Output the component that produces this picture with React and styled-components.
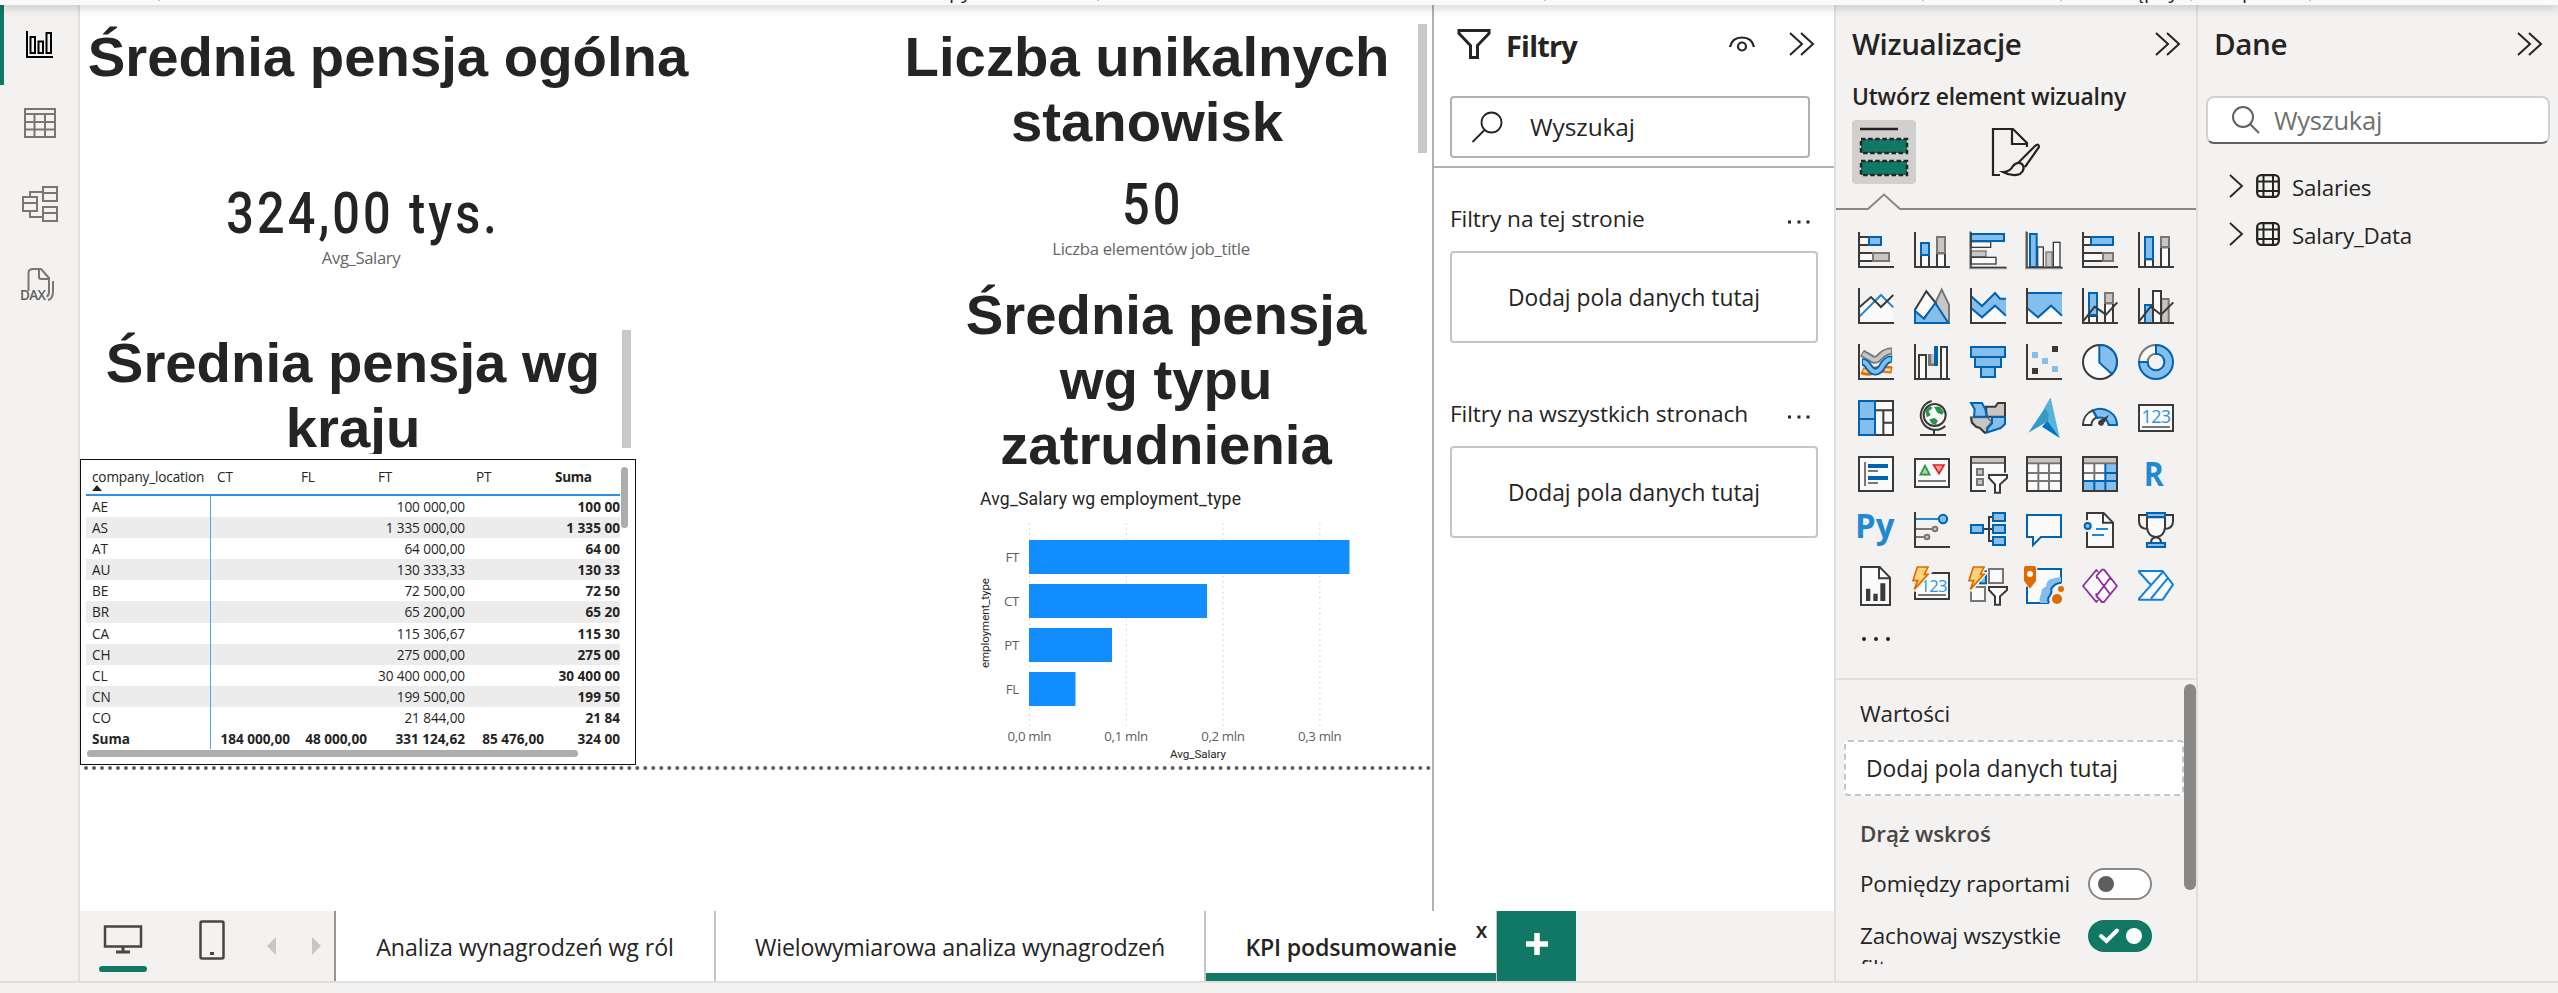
import React from "react";
import styled, { createGlobalStyle, css } from "styled-components";

const ui = `"Open Sans", "Noto Sans", sans-serif`;
const din = `Roboto, "Open Sans", sans-serif`;
const DARK = "#3b3a39";
const BLUE = "#0063b1";
const SKY = "#83beec";
const GRAY = "#797775";
const LGRAY = "#c8c6c4";
const PAPER = "#fafafa";
const GREEN = "#117865";

const Global = createGlobalStyle`
  *, *::before, *::after { box-sizing: border-box; }
  body { margin: 0; background: #f3f2f1; font-family: ${ui}; color: #252423; overflow: hidden; }
  svg { display: block; overflow: visible; flex: none; }
`;

/* ---------- shell ---------- */
const Shell = styled.div`
  display: flex;
  flex-direction: column;
  width: 2558px;
  height: 993px;
  background: #f3f2f1;
`;
const Ribbon = styled.div`
  position: relative;
  z-index: 5;
  flex: none;
  height: 5px;
  background: #fafafa;
  box-shadow: 0 2px 10px rgba(0, 0, 0, 0.28);
`;
const RibbonClip = styled.div`
  position: relative;
  height: 5px;
  overflow: hidden;
`;
const RibbonText = styled.span`
  position: absolute;
  left: ${(p) => p.$x}px;
  top: -21px;
  font-size: 20px;
  line-height: 24px;
  white-space: pre;
`;
const RibbonTick = styled.i`
  position: absolute;
  left: ${(p) => p.$x}px;
  top: 0;
  width: 2px;
  height: 1px;
  background: #c8c6c4;
`;
const Workspace = styled.div`
  display: flex;
  flex: none;
  height: 976px;
`;
const StatusStrip = styled.div`
  flex: none;
  height: 12px;
  border-top: 2px solid #e1dfdd;
`;
const Rail = styled.nav`
  width: 80px;
  flex: none;
  border-right: 2px solid #e1dfdd;
`;
const RailItem = styled.div`
  height: 80px;
  padding-top: 26px;
  padding-left: ${(p) => (p.$on ? 16 : 20)}px;
  border-left: ${(p) => (p.$on ? `4px solid ${GREEN}` : "0")};
`;
const Center = styled.main`
  width: 1754px;
  flex: none;
  display: flex;
  flex-direction: column;
`;
const Stage = styled.div`
  display: flex;
  height: 906px;
  flex: none;
`;
const Canvas = styled.section`
  position: relative;
  width: 1352px;
  flex: none;
  background: #fff;
  overflow: hidden;
`;

/* ---------- report visuals ---------- */
const Visual = styled.div`
  position: absolute;
  left: ${(p) => p.$x}px;
  top: ${(p) => p.$y - 5}px;
  width: ${(p) => p.$w}px;
  height: ${(p) => p.$h}px;
`;
const Heading = styled.div`
  height: 100%;
  overflow: hidden;
  text-align: center;
  font: bold 56.3px/65.2px "Liberation Sans", Arial, sans-serif;
`;
const GrayThumb = styled.div`
  height: 100%;
  background: #c8c8c8;
`;
const Card = styled.div`
  display: flex;
  flex-direction: column;
  align-items: center;
`;
const CardValue = styled.div`
  font: 500 56.5px/62px ${din};
  letter-spacing: 3.6px;
  margin-right: -3.6px;
  white-space: pre;
  transform: scaleX(0.86);
`;
const CardLabel = styled.div`
  margin-top: 1px;
  font-size: 16.7px;
  line-height: 24px;
  letter-spacing: ${(p) => p.$ls || -0.4}px;
  color: #666;
  white-space: nowrap;
`;
const PageEdge = styled.div`
  border-top: 4px dotted #605e5c;
`;

const MatrixFrame = styled.div`
  height: 100%;
  display: flex;
  border: 1.5px solid #111;
  padding: 7px 6px 6px 5px;
  background: #fff;
`;
const MatrixBody = styled.div`
  width: 534px;
`;
const MatrixGrid = styled.div`
  display: grid;
  grid-template-columns: 125px 84px 77px 98px 79px 71px;
  font-size: 13.6px;
`;
const Cell = styled.div`
  height: 21.1px;
  line-height: 22px;
  white-space: pre;
  overflow: hidden;
  text-align: ${(p) => (p.$first ? "left" : "right")};
  padding: ${(p) => (p.$first ? "0 0 0 6px" : p.$last ? "0" : "0 5px 0 0")};
  background: ${(p) => (p.$band ? "#ececec" : "#fff")};
  border-right: ${(p) => (p.$first ? "1.5px solid #4aa5f7" : "0")};
  font-weight: ${(p) => (p.$bold ? 700 : 400)};
  letter-spacing: ${(p) => (p.$bold ? 0 : -0.1)}px;
`;
const HeadCell = styled.div`
  height: 29px;
  line-height: 20px;
  padding: 0 0 0 6px;
  white-space: pre;
  border-bottom: 2px solid #2f8fe8;
  font-weight: ${(p) => (p.$bold ? 700 : 400)};
  letter-spacing: ${(p) => (p.$bold ? -0.3 : -0.15)}px;
`;
const SortMark = styled.i`
  display: block;
  width: 0;
  margin-top: -2px;
  border: 5px solid transparent;
  border-top: 0;
  border-bottom: 6px solid #252423;
`;
const HThumb = styled.div`
  width: 491px;
  height: 7px;
  margin: 1px 0 0 1px;
  border-radius: 4px;
  background: #adadad;
`;
const VThumb = styled.div`
  width: 7px;
  height: 61px;
  margin-left: 1px;
  border-radius: 4px;
  background: #adadad;
`;

/* ---------- page tabs ---------- */
const PageBar = styled.div`
  display: flex;
  height: 70px;
  flex: none;
`;
const ViewModes = styled.div`
  width: 254px;
  display: flex;
  padding-left: 19px;
`;
const ViewMode = styled.div`
  width: ${(p) => p.$w}px;
  margin-right: ${(p) => p.$gap}px;
  padding-top: ${(p) => p.$top}px;
  display: flex;
  flex-direction: column;
  align-items: center;
`;
const ModeUnderline = styled.i`
  width: 48px;
  height: 6px;
  margin-top: 13px;
  border-radius: 3px;
  background: ${GREEN};
`;
const Tab = styled.div`
  position: relative;
  width: ${(p) => p.$w}px;
  flex: none;
  background: #fff;
  border-left: 2px solid ${(p) => (p.$first ? "#979593" : "#c8c6c4")};
  text-align: center;
  font-size: 23.2px;
  line-height: 73px;
  letter-spacing: ${(p) => p.$ls}px;
  white-space: nowrap;
  ${(p) =>
    p.$on &&
    css`
      font-weight: 600;
      box-shadow: inset 0 -8px 0 ${GREEN};
      border-right: 1px solid #c8c6c4;
    `}
`;
const TabClose = styled.span`
  position: absolute;
  right: 9px;
  top: 9px;
  font-size: 21px;
  line-height: 20px;
`;
const AddTab = styled.div`
  width: 79px;
  display: grid;
  place-items: center;
  padding-bottom: 4px;
  background: ${GREEN};
`;

/* ---------- filters pane ---------- */
const Filters = styled.aside`
  width: 402px;
  flex: none;
  background: #fff;
  border-left: 2px solid #b3b0ad;
`;
const FilterTop = styled.div`
  height: 163px;
  padding: 0 20px 0 16px;
  border-bottom: 2px solid #b3b0ad;
`;
const FilterTitleRow = styled.div`
  display: flex;
  align-items: center;
  height: 91px;
  padding: 0 0 13px 7px;
`;
const FilterTitle = styled.h2`
  flex: 1;
  margin: 0 0 0 15px;
  font-size: 29px;
  line-height: 40px;
  font-weight: 700;
  letter-spacing: -0.8px;
  padding-top: 3px;
`;
const FilterSearch = styled.div`
  width: 360px;
  height: 62px;
  display: flex;
  align-items: center;
  padding: 0 0 1px 20px;
  border: 2px solid #b3b0ad;
  border-radius: 4px;
  font-size: 24.5px;
  letter-spacing: -0.1px;
`;
const SearchText = styled.span`
  margin-left: ${(p) => p.$gap}px;
`;
const FilterGroup = styled.div`
  padding: ${(p) => p.$top}px 16px 0;
`;
const FilterHead = styled.div`
  display: flex;
  justify-content: space-between;
  align-items: center;
  height: 32px;
  font-size: 22.7px;
  letter-spacing: ${(p) => p.$ls}px;
  white-space: nowrap;
`;
const DropWell = styled.div`
  width: 368px;
  height: 92px;
  margin-top: 17px;
  display: grid;
  place-items: center;
  border: 2px solid #c8c6c4;
  border-radius: 4px;
  font-size: 22.8px;
`;

/* ---------- visualizations pane ---------- */
const VizPane = styled.aside`
  width: 364px;
  flex: none;
  border-left: 2px solid #e1dfdd;
  border-right: 2px solid #e1dfdd;
`;
const PaneTitle = styled.h2`
  display: flex;
  align-items: center;
  justify-content: space-between;
  height: 42px;
  margin: 18px 16px 0 16px;
  font-size: 29.6px;
  line-height: 42px;
  font-weight: 600;
  letter-spacing: ${(p) => p.$ls}px;
`;
const SubTitle = styled.div`
  margin: 16px 0 0 16px;
  height: 32px;
  line-height: 32px;
  font-size: 22.8px;
  font-weight: 600;
  letter-spacing: -0.2px;
  white-space: nowrap;
`;
const ModeTabs = styled.div`
  display: flex;
  margin: 7px 0 0 16px;
  gap: 68px;
`;
const ModeTab = styled.div`
  width: 64px;
  height: 64px;
  padding: 8px;
  border-radius: 4px;
  background: ${(p) => (p.$on ? "#d2d0ce" : "transparent")};
`;
const TabPointer = styled.div`
  padding-top: 10px;
`;
const Gallery = styled.div`
  display: grid;
  grid-template-columns: repeat(6, 36px);
  grid-auto-rows: 36px;
  gap: 20px;
  height: 446px;
  margin-top: 22px;
  padding-left: 22px;
  align-content: start;
`;
const MoreDots = styled.div`
  display: flex;
  gap: 8px;
  padding: 13px 0 0 4px;
`;
const Dot = styled.i`
  width: ${(p) => p.$s}px;
  height: ${(p) => p.$s}px;
  border-radius: 50%;
  background: #252423;
`;
const Fields = styled.div`
  display: flex;
  border-top: 2px solid #e1dfdd;
`;
const FieldList = styled.div`
  width: 348px;
  height: 284px;
  padding-left: 8px;
  overflow: hidden;
  font-size: 22.4px;
`;
const FieldLabel = styled.div`
  padding-left: 16px;
  margin-top: ${(p) => p.$top}px;
  line-height: 32px;
  letter-spacing: -0.1px;
  font-weight: ${(p) => (p.$bold ? 600 : 400)};
  color: ${(p) => (p.$bold ? "#484644" : "#252423")};
`;
const FieldWell = styled.div`
  width: 340px;
  height: 56px;
  margin-top: 10px;
  padding-left: 20px;
  line-height: 53px;
  font-size: 22.8px;
  background: #fff;
  border: 2px dashed #c8c6c4;
  border-radius: 4px;
`;
const SwitchRow = styled.div`
  display: flex;
  justify-content: space-between;
  width: 308px;
  margin-top: ${(p) => p.$top}px;
  padding-left: 16px;
  line-height: 32px;
  letter-spacing: ${(p) => p.$ls}px;
  white-space: nowrap;
`;
const Switch = styled.span`
  display: flex;
  align-items: center;
  justify-content: ${(p) => (p.$on ? "flex-end" : "flex-start")};
  gap: 7px;
  width: 64px;
  height: 32px;
  padding: 0 ${(p) => (p.$on ? 10 : 8)}px;
  border-radius: 16px;
  border: ${(p) => (p.$on ? "0" : "2px solid #8a8886")};
  background: ${(p) => (p.$on ? GREEN : "#fff")};
`;
const Knob = styled.i`
  width: 16px;
  height: 16px;
  border-radius: 50%;
  background: ${(p) => p.$c};
`;
const FieldThumb = styled.div`
  width: 12px;
  height: 206px;
  margin-top: 4px;
  border-radius: 6px;
  background: #8a8886;
`;

/* ---------- data pane ---------- */
const DataPane = styled.aside`
  width: 360px;
  flex: none;
`;
const DataSearch = styled.div`
  display: flex;
  align-items: center;
  width: 344px;
  height: 48px;
  margin: 31px 0 18px 8px;
  padding-left: 24px;
  background: #fff;
  border: 2px solid #d1d1d1;
  border-bottom-color: #616161;
  border-radius: 8px;
  font-size: 25.6px;
  letter-spacing: -0.3px;
  color: #707070;
`;
const TreeRow = styled.div`
  display: flex;
  align-items: center;
  height: 48px;
  padding-left: 31px;
  font-size: 22.4px;
  letter-spacing: ${(p) => p.$ls}px;
`;
const TreeLabel = styled.span`
  margin-left: 12px;
  padding-top: 2px;
`;

/* ---------- drawing helpers ---------- */
const Svg = ({ w, h, vb, children, ...rest }) => (
  <svg width={w} height={h} viewBox={vb || `0 0 ${w} ${h}`} fill="none" {...rest}>
    {children}
  </svg>
);
const Axis = () => <path d="M3 0V105H108" stroke={DARK} strokeWidth="6" />;
const palette = { w: [PAPER, DARK], b: [SKY, BLUE], g: [LGRAY, GRAY] };
const Box = ({ k, r, sw = 6 }) => (
  <rect x={r[0]} y={r[1]} width={r[2]} height={r[3]} fill={palette[k][0]} stroke={palette[k][1]} strokeWidth={sw} />
);
const Poly = ({ p, f = "none", s = "none", sw = 6, open }) =>
  open ? (
    <polyline points={p} fill={f} stroke={s} strokeWidth={sw} />
  ) : (
    <polygon points={p} fill={f} stroke={s} strokeWidth={sw} />
  );
const Funnel = () => (
  <>
    <rect x="48" y="50" width="66" height="64" fill="#f3f2f1" stroke="none" />
    <Poly p="57,57 111,57 111,66 90,85 90,110 75,110 75,85 57,66" f={PAPER} s={DARK} />
  </>
);
const Bolt = () => (
  <>
    <Poly p="10,-4 44,-4 31,18 43,18 0,68 10,39 -3,39" f="#f3f2f1" s="#f3f2f1" sw={12} />
    <Poly p="10,-3 42,-3 31,19 42,19 1,64 11,38 -3,38" f="#f9d47a" s="#dd6b00" sw={5} />
  </>
);
const Digits = ({ x, y, size }) => (
  <text x={x} y={y} fontSize={size} fontFamily="Open Sans" fill="#2f96da" textAnchor="middle" letterSpacing="-2">
    123
  </text>
);

const visuals = [
  <><Box k="w" r={[3, 15, 30, 24]} /><Box k="b" r={[33, 15, 36, 24]} /><Box k="w" r={[3, 63, 42, 24]} /><Box k="g" r={[45, 63, 48, 24]} /><Axis /></>,
  <><Box k="w" r={[21, 69, 24, 36]} /><Box k="b" r={[21, 33, 24, 36]} /><Box k="w" r={[69, 64, 24, 41]} /><Box k="g" r={[69, 15, 24, 48]} /><Axis /></>,
  <><path d="M1 -2V108H111" stroke="#979593" strokeWidth="7" /><Box k="w" r={[3, 29, 59, 17]} sw={4} /><Box k="b" r={[3, 6, 99, 21]} /><Box k="g" r={[3, 57, 45, 17]} sw={4} /><Box k="w" r={[3, 76, 75, 20]} sw={4} /><path d="M3 0V106H108" stroke={DARK} strokeWidth="4" /></>,
  <><path d="M1 -2V108H111" stroke="#979593" strokeWidth="7" /><Box k="w" r={[35, 45, 17, 60]} sw={4} /><Box k="b" r={[12, 6, 20, 99]} /><Box k="g" r={[60, 60, 18, 45]} sw={4} /><Box k="w" r={[82, 31, 20, 74]} sw={4} /><path d="M3 0V106H108" stroke={DARK} strokeWidth="4" /></>,
  <><Box k="w" r={[3, 15, 24, 24]} /><Box k="b" r={[27, 15, 66, 24]} /><Box k="w" r={[3, 63, 60, 24]} /><Box k="g" r={[63, 63, 30, 24]} /><Axis /></>,
  <><Box k="w" r={[21, 82, 24, 23]} /><Box k="b" r={[21, 15, 24, 66]} /><Box k="w" r={[69, 46, 24, 59]} /><Box k="g" r={[69, 15, 24, 30]} /><Axis /></>,

  <><Poly p="3,56 39,27 69,57 106,20 106,103 3,103" f={PAPER} /><Poly open p="4,86 69,21 106,58" s="#1f86cc" /><Poly open p="4,58 39,27 69,57 106,21" s={DARK} /><Axis /></>,
  <><Poly p="64,45 83,5 105,50 105,105 80,105" f={LGRAY} s={GRAY} /><Poly p="3,65 37,10 66,46 28,93 3,75" f={PAPER} s={DARK} /><Poly p="3,68 30,92 64,45 103,105 3,105" f={SKY} s={BLUE} /></>,
  <><Poly p="3,60 36,90 75,54 108,84 108,105 3,105" f={PAPER} /><Poly p="3,24 36,54 75,15 90,32 108,32 108,84 75,54 36,90 3,60" f={SKY} /><Poly open p="3,24 36,54 75,15 90,32 108,32" s={BLUE} /><Poly open p="3,60 36,88 75,53 108,83" s={BLUE} /><Axis /></>,
  <><Poly p="3,60 36,90 75,54 108,84 108,105 3,105" f={PAPER} /><Poly p="3,15 108,15 108,84 75,52 36,88 3,60" f={SKY} /><Poly open p="3,15 108,15" s={BLUE} /><Poly open p="3,60 36,88 75,53 108,83" s={BLUE} /><Axis /></>,
  <><Box k="w" r={[21, 84, 24, 21]} /><Box k="b" r={[21, 15, 24, 66]} /><Box k="w" r={[69, 46, 24, 59]} /><Box k="g" r={[69, 15, 24, 30]} /><Poly open p="5,98 38,56 72,80 106,43" s={DARK} /><Axis /></>,
  <><Box k="g" r={[70, 33, 22, 72]} /><Box k="b" r={[21, 51, 24, 54]} /><Box k="w" r={[45, 9, 24, 96]} /><Poly open p="5,98 38,56 69,80 106,43" s={DARK} /><Axis /></>,

  <>
    <path d="M12 80Q30 88 48 80T102 78" stroke="#dd6b00" strokeWidth="22" /><path d="M16 79Q30 86 48 80T98 78" stroke="#f9d47a" strokeWidth="9" />
    <path d="M12 27L46 47Q54 50 62 42Q80 22 102 21" stroke={GRAY} strokeWidth="23" /><path d="M15 29L46 47Q54 50 62 42Q80 22 99 21" stroke={LGRAY} strokeWidth="12" />
    <path d="M12 54Q24 54 32 68Q50 96 70 72Q84 44 102 46" stroke={BLUE} strokeWidth="23" /><path d="M15 54Q24 54 32 68Q50 96 70 72Q84 44 99 46" stroke={SKY} strokeWidth="12" />
    <Axis />
  </>,
  <><Box k="w" r={[15, 33, 21, 72]} /><rect x="42" y="30" width="20" height="36" fill={GRAY} /><rect x="52" y="30" width="8" height="28" fill={LGRAY} /><rect x="60" y="6" width="12" height="60" fill={BLUE} /><Box k="w" r={[81, 9, 18, 96]} /><Axis /></>,
  <><Box k="b" r={[3, 9, 102, 30]} /><Box k="b" r={[15, 39, 78, 30]} /><Box k="b" r={[33, 69, 42, 30]} /></>,
  <><path d="M18 24h18v18h-18zM48 42h18v18h-18zM78 66h18v18h-18z" fill={SKY} /><path d="M78 6h18v18h-18zM18 72h18v18h-18z" fill={DARK} /><Axis /></>,
  <><circle cx="54" cy="54" r="51" fill={PAPER} stroke={DARK} strokeWidth="6" /><path d="M52 56V3A51 51 0 0 1 90 90Z" fill={SKY} stroke={BLUE} strokeWidth="6" /></>,
  <><path d="M54 3A51 51 0 0 0 3 54H29A25 25 0 0 1 54 29Z" fill={PAPER} stroke={GRAY} strokeWidth="6" /><path d="M54 3A51 51 0 1 1 3 54H29A25 25 0 1 0 54 29Z" fill={SKY} stroke={BLUE} strokeWidth="6" /></>,

  <><Box k="w" r={[3, 3, 102, 102]} /><path d="M51 31H105M76 31V105M76 68H105" stroke={DARK} strokeWidth="6" /><Box k="b" r={[3, 3, 48, 102]} /><path d="M3 57H51" stroke={BLUE} strokeWidth="6" /></>,
  <>
    <circle cx="62" cy="45" r="33" fill={PAPER} stroke={DARK} strokeWidth="6" />
    <path d="M34 30L48 18L56 24L44 34L50 46L38 52ZM60 20L78 20L90 36L84 44L70 38ZM46 58L62 54L72 62L64 76L52 70Z" fill="#2b9348" />
    <path d="M53 3A44 44 0 1 0 94 78M60 90V104M18 105H96" stroke={DARK} strokeWidth="6" />
  </>,
  <>
    <path d="M48 20H76L84 9H105V50H50Z" fill={LGRAY} stroke={DARK} strokeWidth="6" />
    <path d="M3 52H52L66 66L50 84L52 96L44 98L30 84L18 80L6 68Z" fill={LGRAY} stroke={GRAY} strokeWidth="6" />
    <path d="M3 52L6 68L18 80L30 84L44 98L52 96" stroke={DARK} strokeWidth="6" />
    <path d="M3 9H36L46 28L50 50H12L14 28Z" fill={SKY} stroke={BLUE} strokeWidth="6" />
    <path d="M66 51H105V72L92 84L74 90L52 97V86L66 70Z" fill={SKY} stroke={BLUE} strokeWidth="6" />
  </>,
  <><Poly p="74,-7 55,26 64,76 101,114" f="#59b4d9" /><Poly p="101,114 48,80 64,62" f="#0072c6" /><Poly p="74,-7 55,26 7,98 66,64" f="#3999c6" /><Poly p="74,-7 56,22 78,60" f="#59b4d9" /></>,
  <>
    <path d="M3 75A51 48 0 0 1 32 31L44 52A28 26 0 0 0 28 75Z" fill={PAPER} stroke={DARK} strokeWidth="6" />
    <path d="M33 31A51 48 0 0 1 105 75H80A26 26 0 0 0 46 54Z" fill={SKY} stroke={BLUE} strokeWidth="6" />
    <path d="M82 44L66 70A9 9 0 1 1 54 60Z" fill={DARK} />
  </>,
  <><Box k="w" r={[3, 15, 102, 78]} /><Digits x={54} y={70} size={54} /><path d="M12 81H96" stroke={GRAY} strokeWidth="6" /></>,

  <><Box k="w" r={[3, 3, 102, 102]} /><path d="M21 18V90M30 45H60M30 81H60" stroke={GRAY} strokeWidth="6" /><path d="M30 30H90M30 66H90" stroke={BLUE} strokeWidth="12" /></>,
  <><Box k="w" r={[3, 9, 102, 84]} /><Poly p="33,29 47,56 19,56" f="#98d8a5" s="#2b9348" sw={5} /><Poly p="59,27 90,27 75,53" f="#f7a1a1" s="#e0201b" sw={5} /><path d="M12 75H96" stroke={GRAY} strokeWidth="6" /></>,
  <><Box k="w" r={[3, 3, 102, 102]} /><rect x="6" y="6" width="96" height="13" fill={LGRAY} /><path d="M6 21H102" stroke={DARK} strokeWidth="4" /><Box k="g" r={[21, 39, 18, 18]} /><Box k="g" r={[21, 69, 18, 18]} /><Funnel /></>,
  <><Box k="w" r={[3, 3, 102, 102]} /><rect x="6" y="6" width="96" height="14" fill={LGRAY} /><path d="M6 22H102M6 51H102M6 75H102M37 24V102M69 24V102" stroke={GRAY} strokeWidth="6" /><rect x="3" y="3" width="102" height="102" stroke={DARK} strokeWidth="6" /></>,
  <><Box k="w" r={[3, 3, 102, 102]} /><rect x="6" y="6" width="96" height="14" fill={LGRAY} /><path d="M69 24H102V102H6V75H69Z" fill={SKY} /><path d="M6 22H102M6 51H69M37 24V75" stroke={GRAY} strokeWidth="6" /><path d="M69 51H102M6 75H102M37 75V102M70 24V102" stroke={BLUE} strokeWidth="6" /><rect x="3" y="3" width="102" height="102" stroke={DARK} strokeWidth="6" /></>,
  <text x="17" y="90" fontSize="100" fontWeight="700" fontFamily="Open Sans" fill="#1f8ad0" textLength="60" lengthAdjust="spacingAndGlyphs">R</text>,

  <text x="-9" y="77" fontSize="100" fontWeight="700" fontFamily="Open Sans" fill="#1f8ad0" textLength="118" lengthAdjust="spacingAndGlyphs">Py</text>,
  <><path d="M6 21H72" stroke="#1f8ad0" strokeWidth="6" /><path d="M6 51H56M6 75H32" stroke={GRAY} strokeWidth="6" /><circle cx="87" cy="21" r="12.5" fill={SKY} stroke={BLUE} strokeWidth="6" /><circle cx="63" cy="51" r="7" fill={LGRAY} stroke={GRAY} strokeWidth="6" /><circle cx="39" cy="75" r="7" fill={LGRAY} stroke={GRAY} strokeWidth="6" /><Axis /></>,
  <><path d="M42 51H66M66 15H57V87H66" stroke={DARK} strokeWidth="6" /><Box k="b" r={[3, 39, 36, 24]} /><Box k="b" r={[69, 3, 36, 24]} /><Box k="b" r={[69, 39, 36, 24]} /><Box k="b" r={[69, 75, 36, 24]} /></>,
  <Poly p="3,9 105,9 105,75 45,75 21,99 21,75 3,75" f={PAPER} s={BLUE} />,
  <><Poly p="15,3 65,3 93,32 93,105 15,105" f={PAPER} s={DARK} /><path d="M63 3V32H93" stroke={DARK} strokeWidth="6" /><circle cx="17" cy="42" r="18" fill="#f3f2f1" /><circle cx="17" cy="42" r="9" fill={SKY} stroke={BLUE} strokeWidth="6" /><path d="M42 51H78M30 69H66" stroke="#1f8ad0" strokeWidth="6" /></>,
  <>
    <path d="M27 9H3V28Q3 50 28 51M81 9H105V28Q105 50 80 51" stroke={DARK} strokeWidth="6" />
    <path d="M27 16V46Q30 74 54 75Q78 74 81 46V16Z" fill={PAPER} stroke={DARK} strokeWidth="6" />
    <path d="M39 92Q39 78 54 76Q69 78 69 92" stroke={DARK} strokeWidth="6" />
    <Box k="b" r={[27, 3, 54, 12]} /><Box k="b" r={[27, 93, 54, 12]} />
  </>,

  <><Poly p="9,-3 65,-3 96,29 96,111 9,111" f={PAPER} s={DARK} /><path d="M63 -3V31H95" stroke={DARK} strokeWidth="6" /><path d="M24 62H37V99H24ZM46 77H59V99H46ZM67 46H82V99H67Z" fill={DARK} /></>,
  <><Box k="w" r={[3, 15, 102, 78]} /><Digits x={59} y={71} size={50} /><path d="M12 81H96" stroke={GRAY} strokeWidth="6" /><Bolt /></>,
  <><rect x="57" y="3" width="42" height="42" fill={PAPER} stroke={GRAY} strokeWidth="6" /><rect x="3" y="57" width="42" height="42" fill={PAPER} stroke={GRAY} strokeWidth="6" /><rect x="57" y="57" width="42" height="42" fill={PAPER} stroke={GRAY} strokeWidth="6" /><rect x="30" y="10" width="18" height="36" fill={SKY} stroke={BLUE} strokeWidth="6" /><Funnel /><Bolt /></>,
  <>
    <rect x="3" y="3" width="102" height="102" fill={PAPER} stroke={BLUE} strokeWidth="6" />
    <path d="M42 105Q38 88 46 78Q44 60 60 56Q62 34 78 32L105 26V105Z" fill={SKY} />
    <path d="M69 108Q60 92 72 82Q76 70 78 60Q94 44 112 46V112H69Z" fill="#f3f2f1" />
    <path d="M69 105Q62 92 72 82Q78 74 76 62Q88 44 105 45" stroke={BLUE} strokeWidth="6" />
    <rect x="-8" y="-8" width="42" height="64" fill="#f3f2f1" />
    <path d="M-2 -6H26L30 -2V38L12 62L-6 38V-2Z" fill="#dd6b00" /><circle cx="12" cy="18" r="9" fill={PAPER} />
    <circle cx="105" cy="63" r="9" fill="#dd6b00" /><circle cx="93" cy="93" r="15" fill="#dd6b00" />
  </>,
  <>
    <path d="M3 54L43 5H66L105 54L66 102H43Z" fill={PAPER} />
    <path d="M48 12L43 6L3 54L43 102L48 96M43 24L60 5H66L105 54L66 102H60L43 84L84 30M43 24L84 78M43 24L46 32M43 84V76" stroke="#8f2d9c" strokeWidth="5.5" strokeLinejoin="round" />
  </>,
  <>
    <path d="M3 9H75L105 48V56L75 95H3V92L39 51L3 14Z" fill={PAPER} />
    <path d="M39 51L3 12V9H74L105 50L74 95H3V92L76 10M39 92L88 32" stroke="#0f7fe0" strokeWidth="6" strokeLinejoin="round" />
  </>,
];

const Chevrons = () => (
  <Svg w="25" h="24">
    <path d="M1 1L13 12L1 23M12 1L24 12L12 23" stroke="#252423" strokeWidth="2" />
  </Svg>
);

const FunnelMark = () => (
  <Svg w="34" h="30">
    <path d="M2 1.500H32V4.500L20.500 16.500V28.500H13.500V16.500L2 4.500Z" stroke="#252423" strokeWidth="3" />
  </Svg>
);

/* ---------- data ---------- */
const rows = [
  ["AE", "100 000,00", "100 00"],
  ["AS", "1 335 000,00", "1 335 00"],
  ["AT", "64 000,00", "64 00"],
  ["AU", "130 333,33", "130 33"],
  ["BE", "72 500,00", "72 50"],
  ["BR", "65 200,00", "65 20"],
  ["CA", "115 306,67", "115 30"],
  ["CH", "275 000,00", "275 00"],
  ["CL", "30 400 000,00", "30 400 00"],
  ["CN", "199 500,00", "199 50"],
  ["CO", "21 844,00", "21 84"],
];
const totals = ["Suma", "184 000,00", "48 000,00", "331 124,62", "85 476,00", "324 00"];
const bars = [["FT", 320.5], ["CT", 178], ["PT", 83], ["FL", 46.5]];

const Matrix = () => (
  <MatrixFrame>
    <MatrixBody>
      <MatrixGrid>
        <HeadCell>company_location<SortMark /></HeadCell>
        {["CT", "FL", "FT", "PT"].map((h) => <HeadCell key={h}>{h}</HeadCell>)}
        <HeadCell $bold>Suma</HeadCell>
        {rows.map(([code, ft, sum], i) => (
          <React.Fragment key={code}>
            <Cell $first $band={i % 2}>{code}</Cell>
            <Cell $band={i % 2} />
            <Cell $band={i % 2} />
            <Cell $band={i % 2}>{ft}</Cell>
            <Cell $band={i % 2} />
            <Cell $last $bold $band={i % 2}>{sum}</Cell>
          </React.Fragment>
        ))}
        {totals.map((t, i) => <Cell key={t} $bold $first={i === 0} $last={i === 5}>{t}</Cell>)}
      </MatrixGrid>
      <HThumb />
    </MatrixBody>
    <VThumb />
  </MatrixFrame>
);

const BarChart = () => (
  <Svg w="400" h="290" fontFamily="Open Sans" fontSize="13.3">
    <text x="10" y="35" fontFamily="Roboto" fontSize="17.6" fill="#252423" textLength="261">Avg_Salary wg employment_type</text>
    {[0, 1, 2, 3].map((i) => (
      <g key={i}>
        <path d={`M${59.5 + i * 96.8} 53V257`} stroke="#c8c6c4" strokeDasharray="1.300 4" />
        <text x={59.3 + i * 96.8} y="271" textAnchor="middle" fill="#605e5c" letterSpacing="-0.35">{`0,${i} mln`}</text>
      </g>
    ))}
    {bars.map(([name, w], i) => (
      <g key={name}>
        <rect x="59" y={70 + i * 44} width={w} height="34" fill="#118dff" />
        <text x="49" y={92 + i * 44} textAnchor="end" fill="#605e5c" letterSpacing="-0.3">{name}</text>
      </g>
    ))}
    <text x="228" y="288" textAnchor="middle" fontFamily="Roboto" fontSize="11.6" fill="#252423" textLength="56">Avg_Salary</text>
    <text transform="translate(19 153) rotate(-90)" textAnchor="middle" fontFamily="Roboto" fontSize="11.6" fill="#252423" textLength="90">employment_type</text>
  </Svg>
);

const RowDots = () => (
  <Svg w="30" h="12">
    <path d="M0 10H3M9.500 10H12.500M18.500 10H21.500" stroke="#252423" strokeWidth="3" />
  </Svg>
);

export default function App() {
  return (
    <Shell>
      <Global />
      <Ribbon>
        <RibbonClip>
          <RibbonText $x={949}>py</RibbonText>
          <RibbonText $x={2133}>ąpny</RibbonText>
          <RibbonText $x={2242}>p</RibbonText>
          {[158, 1097, 1544, 1922, 2060, 2190, 2309].map((x) => <RibbonTick key={x} $x={x} />)}
        </RibbonClip>
      </Ribbon>

      <Workspace>
        <Rail>
          <RailItem $on>
            <Svg w="36" h="30">
              <path d="M7 0V26H33M10.500 6H15V22H10.500ZM18.500 10.500H23V22H18.500ZM26.500 2H31V22H26.500Z" stroke="#000" strokeWidth="2" />
            </Svg>
          </RailItem>
          <RailItem>
            <Svg w="36" h="32">
              <path d="M5 -2H35V26H5ZM5 3H35M5 11H35M5 18.500H35M14.500 3V26M25 3V26" stroke="#797775" strokeWidth="2" />
            </Svg>
          </RailItem>
          <RailItem>
            <Svg w="40" h="40">
              <path d="M3 7H17V21H3ZM3 13H17M23 -3H37V11H23ZM23 3H37M23 17H37V31H23ZM23 23H37M10 7V2H23M10 21V27H23" stroke="#797775" strokeWidth="2" transform="translate(0 -1)" />
            </Svg>
          </RailItem>
          <RailItem>
            <Svg w="40" h="40">
              <path d="M8.500 20V2Q8.500 -2 13 -2H21L29 7V21Q29 25 26.500 25.500M19 -2V6Q19 8 21 8H29M33 10V20Q33 28 28 29" stroke="#797775" strokeWidth="2" />
              <text x="0" y="29" fontFamily="Open Sans" fontSize="13.500" fontWeight="600" fill="#605e5c" textLength="26">DAX</text>
            </Svg>
          </RailItem>
        </Rail>

        <Center>
          <Stage>
            <Canvas>
              <Visual $x={0} $y={24} $w={616} $h={70}><Heading>Średnia pensja ogólna</Heading></Visual>
              <Visual $x={815} $y={24} $w={504} $h={135}><Heading>Liczba unikalnych stanowisk</Heading></Visual>
              <Visual $x={1338} $y={24} $w={9} $h={129}><GrayThumb /></Visual>
              <Visual $x={81} $y={183} $w={400} $h={100}>
                <Card><CardValue>324,00 tys.</CardValue><CardLabel>Avg_Salary</CardLabel></Card>
              </Visual>
              <Visual $x={871} $y={174} $w={400} $h={100}>
                <Card><CardValue>50</CardValue><CardLabel $ls={-0.3}>Liczba elementów job_title</CardLabel></Card>
              </Visual>
              <Visual $x={13} $y={330} $w={520} $h={124}><Heading>Średnia pensja wg kraju</Heading></Visual>
              <Visual $x={542} $y={330} $w={9} $h={118}><GrayThumb /></Visual>
              <Visual $x={866} $y={282} $w={440} $h={200}><Heading>Średnia pensja wg typu zatrudnienia</Heading></Visual>
              <Visual $x={0} $y={459} $w={556} $h={306}><Matrix /></Visual>
              <Visual $x={890} $y={470} $w={400} $h={290}><BarChart /></Visual>
              <Visual $x={4} $y={766} $w={1348} $h={4}><PageEdge /></Visual>
            </Canvas>
            <Filters>
              <FilterTop>
                <FilterTitleRow>
                  <FunnelMark />
                  <FilterTitle>Filtry</FilterTitle>
                  <Svg w="26" h="16">
                    <path d="M1 11Q3 1.500 13 1.500T25 11" stroke="#252423" strokeWidth="2.200" />
                    <circle cx="13" cy="10.500" r="4" stroke="#252423" strokeWidth="2.200" />
                  </Svg>
                  <Svg w="34" h="24" />
                  <Chevrons />
                </FilterTitleRow>
                <FilterSearch>
                  <Svg w="30" h="30">
                    <circle cx="19.500" cy="10.500" r="10" stroke="#252423" strokeWidth="1.800" />
                    <path d="M12.500 18L0.500 30" stroke="#252423" strokeWidth="1.800" />
                  </Svg>
                  <SearchText $gap={28}>Wyszukaj</SearchText>
                </FilterSearch>
              </FilterTop>
              <FilterGroup $top={34}>
                <FilterHead $ls={-0.1}>Filtry na tej stronie<RowDots /></FilterHead>
                <DropWell>Dodaj pola danych tutaj</DropWell>
              </FilterGroup>
              <FilterGroup $top={54}>
                <FilterHead $ls={-0.1}>Filtry na wszystkich stronach<RowDots /></FilterHead>
                <DropWell>Dodaj pola danych tutaj</DropWell>
              </FilterGroup>
            </Filters>
          </Stage>
          <PageBar>
            <ViewModes>
              <ViewMode $w={48} $gap={52} $top={14}>
                <Svg w="38" h="28">
                  <path d="M1 1.500H37V21.500H1Z" stroke="#484644" strokeWidth="2.500" />
                  <path d="M19 22V27M12 27H26" stroke="#484644" strokeWidth="3" />
                </Svg>
                <ModeUnderline />
              </ViewMode>
              <ViewMode $w={26} $gap={42} $top={9}>
                <Svg w="26" h="40">
                  <rect x="1.500" y="1.500" width="23" height="37" rx="1.500" stroke="#484644" strokeWidth="2.500" />
                  <path d="M11 33.500H15" stroke="#484644" strokeWidth="3" />
                </Svg>
              </ViewMode>
              <ViewMode $w={9} $gap={36} $top={26}>
                <Svg w="9" h="18"><path d="M9 0V18L0 9Z" fill="#c8c6c4" /></Svg>
              </ViewMode>
              <ViewMode $w={9} $gap={0} $top={26}>
                <Svg w="9" h="18"><path d="M0 0V18L9 9Z" fill="#c8c6c4" /></Svg>
              </ViewMode>
            </ViewModes>
            <Tab $first $w={380} $ls={-0.1}>Analiza wynagrodzeń wg ról</Tab>
            <Tab $w={490} $ls={-0.2}>Wielowymiarowa analiza wynagrodzeń</Tab>
            <Tab $on $w={293} $ls={-0.2}>KPI podsumowanie<TabClose>x</TabClose></Tab>
            <AddTab>
              <Svg w="22" h="22"><path d="M11 0V22M0 11H22" stroke="#fff" strokeWidth="5.500" /></Svg>
            </AddTab>
          </PageBar>
        </Center>

        <VizPane>
          <PaneTitle $ls={-0.4}>Wizualizacje<Chevrons /></PaneTitle>
          <SubTitle>Utwórz element wizualny</SubTitle>
          <ModeTabs>
            <ModeTab $on>
              <Svg w="48" h="48">
                <path d="M0 1H38" stroke="#252423" strokeWidth="2.500" />
                <rect x="1" y="11" width="46" height="14" fill={GREEN} stroke="#252423" strokeWidth="2.500" strokeDasharray="4.500 2.600" />
                <rect x="1" y="33" width="46" height="14" fill={GREEN} stroke="#252423" strokeWidth="2.500" strokeDasharray="4.500 2.600" />
              </Svg>
            </ModeTab>
            <ModeTab>
              <Svg w="48" h="48">
                <path d="M8 47H1V1H21L35 15V19M20 1V16H35" stroke="#252423" strokeWidth="2.200" />
                <path d="M26 35L43 18Q47 15 47 19L33 39M11 44Q18 44 21 38Q25 33 30 36Q34 41 28 46Q20 49 11 44Z" stroke="#252423" strokeWidth="2.200" />
              </Svg>
            </ModeTab>
          </ModeTabs>
          <TabPointer>
            <Svg w="360" h="16">
              <path d="M0 15H32L48 0.500L64 15H360" stroke="#8a8886" strokeWidth="2" />
            </Svg>
          </TabPointer>
          <Gallery>
            {visuals.map((v, i) => <Svg key={i} w="36" h="36" vb="0 0 108 108">{v}</Svg>)}
            <MoreDots><Dot $s={4} /><Dot $s={4} /><Dot $s={4} /></MoreDots>
          </Gallery>
          <Fields>
            <FieldList>
              <FieldLabel $top={18}>Wartości</FieldLabel>
              <FieldWell>Dodaj pola danych tutaj</FieldWell>
              <FieldLabel $bold $top={22}>Drąż wskroś</FieldLabel>
              <SwitchRow $top={18} $ls={-0.1}>Pomiędzy raportami<Switch><Knob $c="#605e5c" /></Switch></SwitchRow>
              <SwitchRow $top={20} $ls={-0.1}>
                <span>Zachowaj wszystkie<br />filtry</span>
                <Switch $on>
                  <Svg w="20" h="16"><path d="M2 8L7.500 13L18 2.500" stroke="#fff" strokeWidth="4" strokeLinecap="round" /></Svg>
                  <Knob $c="#fff" />
                </Switch>
              </SwitchRow>
            </FieldList>
            <FieldThumb />
          </Fields>
        </VizPane>

        <DataPane>
          <PaneTitle $ls={-0.4}>Dane<Chevrons /></PaneTitle>
          <DataSearch>
            <Svg w="28" h="28">
              <circle cx="11" cy="11" r="10" stroke="#616161" strokeWidth="2" />
              <path d="M18 18L27 27" stroke="#616161" strokeWidth="2" />
            </Svg>
            <SearchText $gap={14}>Wyszukaj</SearchText>
          </DataSearch>
          {["Salaries", "Salary_Data"].map((name) => (
            <TreeRow key={name} $ls={-0.2}>
              <Svg w="27" h="24"><path d="M1 1L13 12L1 23" stroke="#252423" strokeWidth="1.800" /></Svg>
              <Svg w="24" h="24">
                <rect x="1.200" y="1.200" width="21.600" height="21.600" rx="4" stroke="#252423" strokeWidth="2.300" />
                <path d="M7.500 1V23M17 1V23M1 7.500H23M1 17H23" stroke="#252423" strokeWidth="2" />
              </Svg>
              <TreeLabel>{name}</TreeLabel>
            </TreeRow>
          ))}
        </DataPane>
      </Workspace>
      <StatusStrip />
    </Shell>
  );
}
